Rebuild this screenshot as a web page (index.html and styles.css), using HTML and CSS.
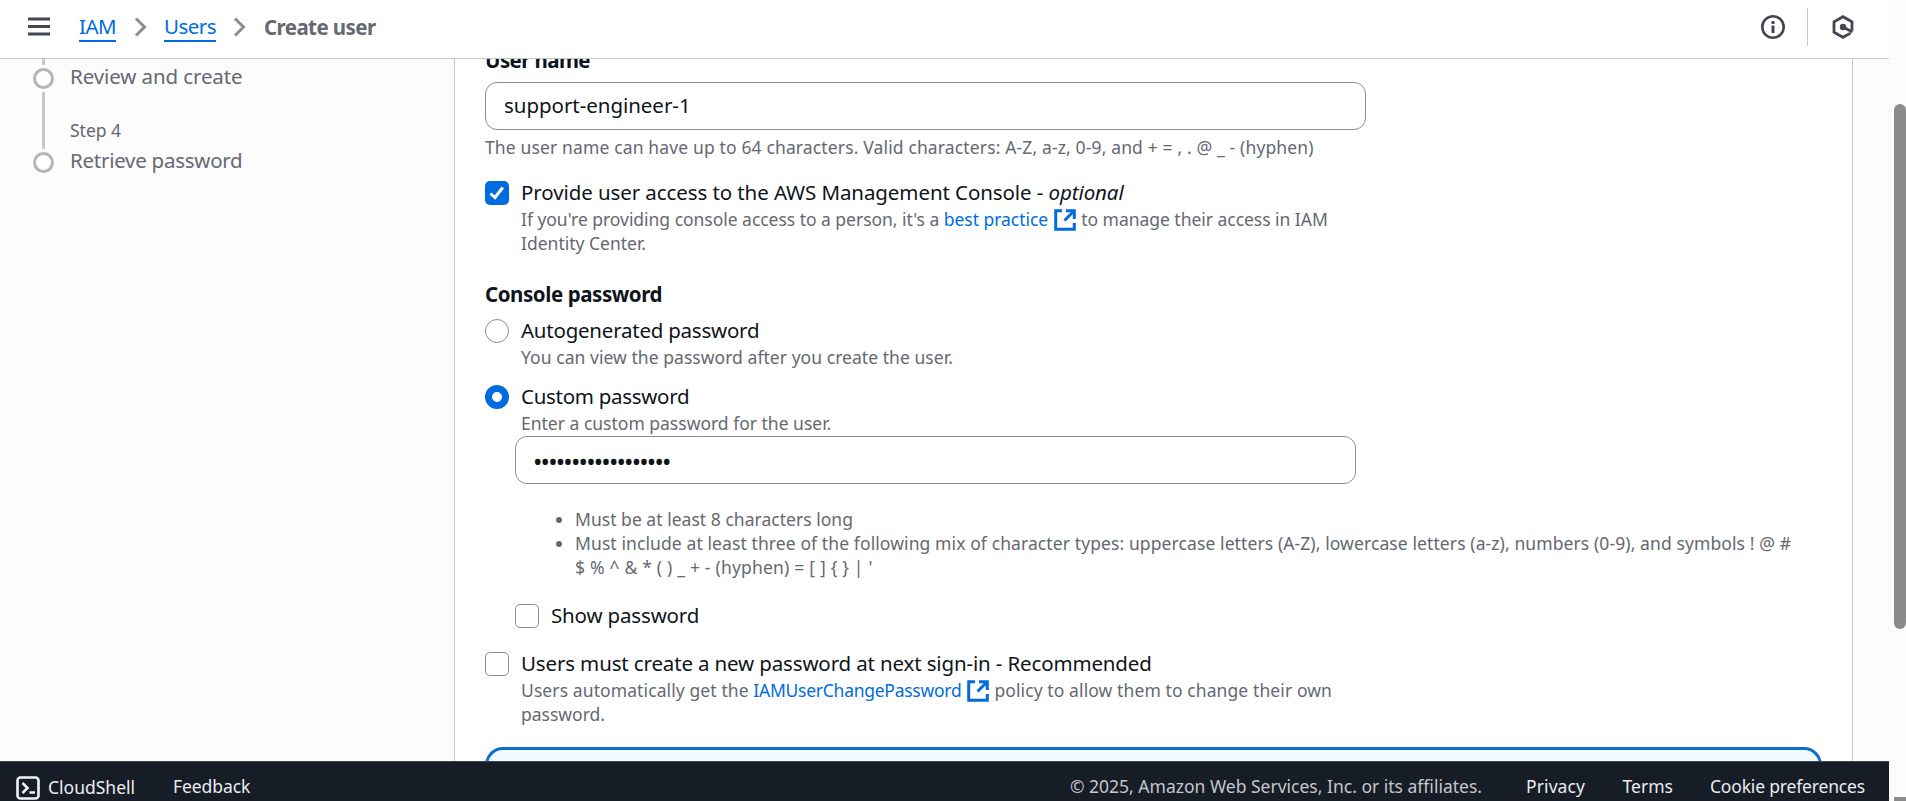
FILE: index.html
```html
<!DOCTYPE html>
<html lang="en">
<head>
<meta charset="utf-8">
<title>Create user | IAM</title>
<link rel="stylesheet" href="styles.css">
</head>
<body>
<div class="app">
  <header class="topbar">
    <svg class="menu" width="22" height="20" viewBox="0 0 22 20"><path d="M0 2h22M0 9.500h22M0 17h22"/></svg>
    <nav class="crumbs">
      <a class="crumb iam" href="#">IAM</a>
      <svg class="chev" width="14" height="20" viewBox="0 0 14 20"><path d="M2 1.500l8.500 8.500L2 18.500"/></svg>
      <a class="crumb users" href="#">Users</a>
      <svg class="chev" width="14" height="20" viewBox="0 0 14 20"><path d="M2 1.500l8.500 8.500L2 18.500"/></svg>
      <span class="current">Create user</span>
    </nav>
    <div class="tools">
      <svg width="24" height="24" viewBox="0 0 24 24" fill="none" stroke="#424650" stroke-width="2.600"><circle cx="12" cy="12" r="10.700"/><path d="M12 6v3M12 10.500v7.500" stroke-width="3"/></svg>
      <span class="divider"></span>
      <svg width="24" height="26" viewBox="0 0 24 26" fill="none" stroke="#424650" stroke-width="2.800"><path d="M21 16.500V7.700L12 2.700 3 7.700v10.600l9 5 7.500-4.200"/><path d="M12 13l9.500 5"/><circle cx="12" cy="13" r="3.200" fill="#424650" stroke="none"/></svg>
    </div>
  </header>

  <div class="body">
    <aside class="steps">
      <div class="rail">
        <span class="line first"></span><span class="dot"></span><span class="line"></span><span class="dot"></span>
      </div>
      <div class="names">
        <div class="step s3">Review and create</div>
        <div class="num">Step 4</div>
        <div class="step s4">Retrieve password</div>
      </div>
    </aside>

    <main class="panel">
      <div class="label title1">User name</div>
      <div class="input name"><span class="t-input">support-engineer-1</span></div>
      <div class="hint below"><span class="t-hint">The user name can have up to 64 characters. Valid characters: A-Z, a-z, 0-9, and + = , . @ _ - (hyphen)</span></div>

      <div class="option access">
        <span class="check on"><svg width="24" height="24" viewBox="0 0 24 24"><path d="M5.500 12.500l4.500 4L17.800 6.500"/></svg></span>
        <div>
          <div class="text"><span class="t-access">Provide user access to the AWS Management Console - <em>optional</em></span></div>
          <div class="hint"><span class="t-best">If you're providing console access to a person, it's a <a href="#">best practice <svg class="ext" width="22" height="22" viewBox="0 0 22 22"><path d="M8 1.700H1.700v18.600h18.600V14M12 1.700h8.300V10M20 2L10.500 11.500"/></svg></a> to manage their access in IAM</span><br>Identity Center.</div>
        </div>
      </div>

      <div class="label title2"><span class="t-console">Console password</span></div>
      <div class="option auto">
        <span class="radio"></span>
        <div>
          <div class="text"><span class="t-auto">Autogenerated password</span></div>
          <div class="hint"><span class="t-view">You can view the password after you create the user.</span></div>
        </div>
      </div>
      <div class="option custom">
        <span class="radio on"></span>
        <div>
          <div class="text"><span class="t-custom">Custom password</span></div>
          <div class="hint"><span class="t-enter">Enter a custom password for the user.</span></div>
        </div>
      </div>
      <div class="input pass"><span class="t-dots">••••••••••••••••••</span></div>
      <ul class="rules hint">
        <li><span class="t-rule1">Must be at least 8 characters long</span></li>
        <li><span class="t-rule2">Must include at least three of the following mix of character types: uppercase letters (A-Z), lowercase letters (a-z), numbers (0-9), and symbols ! @ #</span><br><span class="t-rule3">$ % ^ &amp; * ( ) _ + - (hyphen) = [ ] { } | '</span></li>
      </ul>
      <div class="option show">
        <span class="check"></span>
        <div class="text"><span class="t-show">Show password</span></div>
      </div>
      <div class="option must">
        <span class="check"></span>
        <div>
          <div class="text"><span class="t-must">Users must create a new password at next sign-in - Recommended</span></div>
          <div class="hint"><span class="t-policy">Users automatically get the <a href="#">IAMUserChangePassword <svg class="ext" width="22" height="22" viewBox="0 0 22 22"><path d="M8 1.700H1.700v18.600h18.600V14M12 1.700h8.300V10M20 2L10.500 11.500"/></svg></a> policy to allow them to change their own</span><br>password.</div>
        </div>
      </div>
      <div class="alert"></div>
    </main>
  </div>

  <footer class="footer">
    <svg width="24" height="24" viewBox="0 0 24 24" fill="none" stroke="#f3f3f7" stroke-width="2.600"><rect x="1.500" y="1.500" width="21" height="21" rx="3"/><path d="M6.500 7l5 5-5 5M13.500 16.500h5.500"/></svg>
    <span class="f-cloud">CloudShell</span>
    <span class="f-feed">Feedback</span>
    <span class="f-copy">© 2025, Amazon Web Services, Inc. or its affiliates.</span>
    <span class="f-priv">Privacy</span>
    <span class="f-terms">Terms</span>
    <span class="f-cookie">Cookie preferences</span>
  </footer>
</div>
<div class="scroll"><span class="thumb"></span><span class="corner"></span></div>
</body>
</html>
```
FILE: styles.css
```css
* { box-sizing: border-box; }
body {
  margin: 0;
  width: 1906px;
  height: 801px;
  overflow: hidden;
  display: flex;
  background: #fcfcfd;
  color: #0f141a;
  font-family: "Noto Sans", "Open Sans", sans-serif;
  font-size: 20.5px;
  line-height: 30px;
  white-space: nowrap;
}
a { color: #006ce0; text-decoration: none; }
svg { flex: none; display: block; }
.app { width: 1889px; height: 801px; display: flex; flex-direction: column; }

.topbar {
  height: 59px;
  flex: none;
  display: flex;
  align-items: center;
  justify-content: space-between;
  background: #fff;
  border-bottom: 1px solid #c6c6cd;
  padding: 0 34px 4px 28px;
}
.menu { stroke: #424650; stroke-width: 3; }
.crumbs { flex: 1; display: flex; align-items: center; margin-left: 29px; }
.crumb { border-bottom: 2px solid #006ce0; line-height: 26px; height: 29px; margin-top: 1px; letter-spacing: -0.54px; }
.chev { fill: none; stroke: #8c8c94; stroke-width: 3; margin: 0 16.500px 0 17.500px; }
.current { font-weight: 700; color: #656871; letter-spacing: -0.58px; }
.tools { display: flex; align-items: center; }
.divider { width: 1px; height: 38px; background: #c6c6cd; margin: 0 23px 0 22px; }

.body { flex: 1; min-height: 0; display: flex; overflow: hidden; }
.steps { width: 454px; flex: none; display: flex; padding-left: 33px; color: #656871; }
.rail { width: 21px; display: flex; flex-direction: column; align-items: center; }
.line { width: 3px; height: 57px; background: #c6c6cd; margin: 3px 0; }
.line.first { height: 6px; margin-top: 0; }
.dot { width: 21px; height: 21px; border: 3px solid #b4b4bb; border-radius: 50%; background: #fff; }
.names { margin-left: 16px; padding-top: 2px; }
.step { line-height: 30px; }
.s3 { letter-spacing: -0.1px; }
.s4 { letter-spacing: -0.26px; }
.num { font-size: 17.500px; line-height: 24px; margin: 27px 0 3px; }

.panel {
  width: 1399px;
  height: 760px;
  flex: none;
  margin-top: -14px;
  padding: 0 30px;
  background: #fff;
  border: 1px solid #c6c6cd;
  border-width: 0 1px;
}
.label { font-weight: 700; height: 30px; }
.title1 { letter-spacing: -0.6px; }
.input {
  height: 48px;
  border: 1px solid #8c8c94;
  border-radius: 12px;
  line-height: 44px;
  padding-left: 18px;
}
.input.name { width: 881px; margin-top: 7px; letter-spacing: -0.04px; }
.input.pass {
  width: 841px;
  margin: 1px 0 0 30px;
  padding: 2px 0 0 17px;
  font-size: 25px;
  letter-spacing: -1.81px;
}
.hint { font-size: 17.500px; line-height: 24px; color: #656871; }
.below { margin-top: 5px; }
.option { display: flex; gap: 12px; }
.access { margin-top: 18px; }
.title2 { margin-top: 24px; }
.auto { margin-top: 6px; }
.custom { margin-top: 12px; }
.check, .radio {
  width: 24px;
  height: 24px;
  flex: none;
  margin-top: 4px;
  border: 2px solid #8c8c94;
  border-width: 1.500px;
  border-radius: 5px;
  background: #fff;
}
.check.on { border: 0; background: #006ce0; }
.check.on path { fill: none; stroke: #fff; stroke-width: 3; }
.radio { border-radius: 50%; }
.radio.on { border: 7px solid #006ce0; }
.ext { display: inline-block; vertical-align: -2px; fill: none; stroke: #006ce0; stroke-width: 3; margin: -3px 1px; }
.rules { margin: 23px 0 0; padding-left: 90px; }
.show { margin: 21px 0 0 30px; }
.must { margin-top: 18px; }
.alert { height: 60px; margin-top: 21px; background: #f0fbff; border: 3px solid #0f6cd3; border-radius: 18px; }

.t-hint { letter-spacing: 0.14px; }
.t-access { letter-spacing: -0.09px; }
.t-best { letter-spacing: -0.03px; }
.t-console { letter-spacing: -0.43px; }
.t-auto { letter-spacing: -0.23px; }
.t-view { letter-spacing: 0.05px; }
.t-custom { letter-spacing: -0.29px; }
.t-rule1 { letter-spacing: 0.03px; }
.t-rule2 { letter-spacing: 0.1px; }
.t-rule3 { letter-spacing: 0.2px; }
.t-show { letter-spacing: -0.16px; }
.t-must { letter-spacing: -0.145px; }
.t-policy { letter-spacing: 0.1px; }
.t-policy a { letter-spacing: -0.26px; }

.footer {
  height: 40px;
  flex: none;
  display: flex;
  background: #161d26;
  border-top: 1px solid #424650;
  padding: 14px 24px 0 16px;
  color: #ebebf0;
  font-size: 17.500px;
  line-height: 24px;
}
.footer span { margin-top: -2px; }
.footer .f-cloud { margin: -1px 0 0 8px; }
.f-feed { margin-left: 38px; letter-spacing: -0.1px; }
.f-copy { margin-left: auto; color: #c6c6cd; }
.f-priv { margin-left: 44px; letter-spacing: 0.1px; }
.f-terms { margin-left: 37.500px; }
.f-cookie { margin-left: 37px; letter-spacing: -0.17px; }

.scroll { width: 17px; display: flex; flex-direction: column; align-items: flex-end; justify-content: space-between; padding-top: 104px; }
.thumb { width: 12px; height: 525px; border-radius: 6px; background: #8b8b8b; }
.corner { width: 12px; height: 4px; background: #8b8b8b; }
```
